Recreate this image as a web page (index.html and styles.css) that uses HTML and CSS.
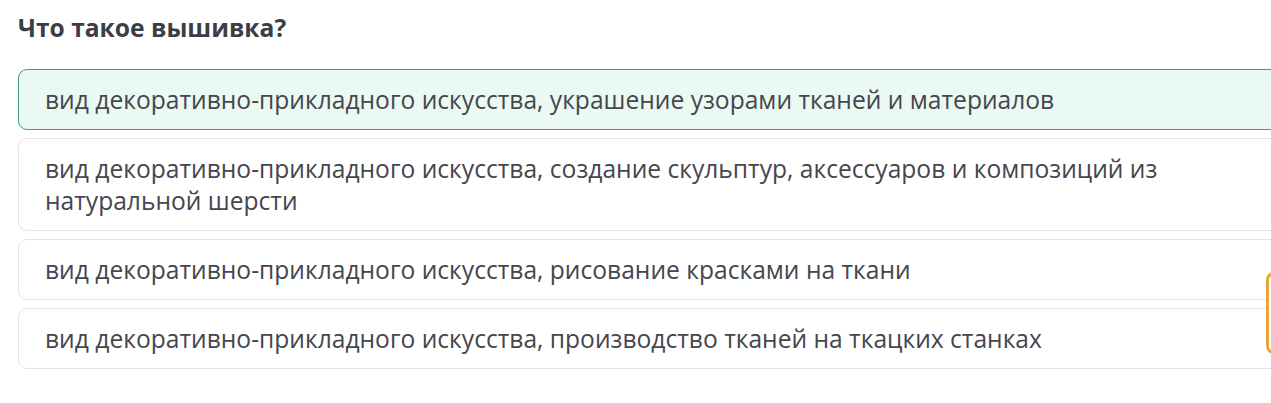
FILE: index.html
```html
<!DOCTYPE html>
<html lang="ru">
<head>
<meta charset="utf-8">
<link rel="stylesheet" href="styles.css">
</head>
<body>
<div class="page">
  <h1 class="question">Что такое вышивка?</h1>
  <div class="options">
    <div class="option selected">вид декоративно-прикладного искусства, украшение узорами тканей и материалов</div>
    <div class="option">вид декоративно-прикладного искусства, создание скульптур, аксессуаров и композиций из натуральной шерсти</div>
    <div class="option">вид декоративно-прикладного искусства, рисование красками на ткани</div>
    <div class="option">вид декоративно-прикладного искусства, производство тканей на ткацких станках</div>
  </div>
  <div class="side-tab"></div>
</div>
</body>
</html>
```
FILE: styles.css
```css
html, body {
  margin: 0;
  padding: 0;
  background: #ffffff;
  overflow: hidden;
}
.page {
  position: relative;
  width: 1271px;
  height: 403px;
  overflow: hidden;
  padding: 11px 0 0 18px;
  box-sizing: border-box;
  font-family: "Open Sans", "Liberation Sans", sans-serif;
}
.question {
  margin: 0 0 24px 0;
  font-size: 24.6px;
  font-weight: 700;
  line-height: 34px;
  color: #3b3e45;
}
.options {
  display: flex;
  flex-direction: column;
  gap: 8px;
  width: 1290px;
}
.option {
  border: 1px solid #e4e4e6;
  border-radius: 9px;
  padding: 14px 26px 13px;
  font-size: 24.6px;
  line-height: 32px;
  color: #45464e;
  background: #ffffff;
}
.option.selected {
  background: #ebf9f3;
  border-color: #3e9d84;
}
.side-tab {
  position: absolute;
  left: 1266px;
  top: 272px;
  width: 40px;
  height: 76px;
  border: 3px solid #eaa53a;
  border-radius: 8px;
  background: #ffffff;
}
```
